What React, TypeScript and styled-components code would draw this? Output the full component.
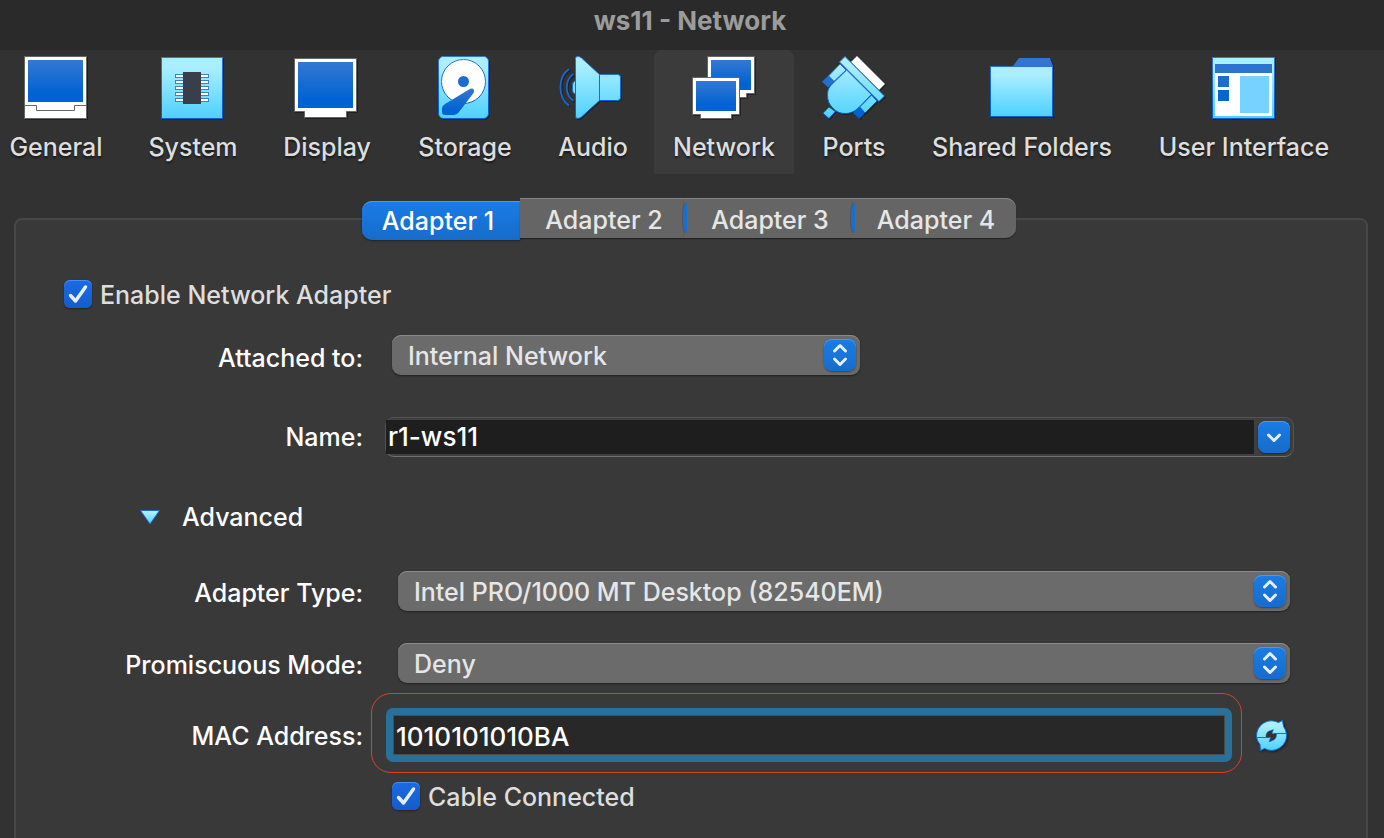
import React, { useState } from "react";
import styled, { createGlobalStyle, css } from "styled-components";

const GlobalStyle = createGlobalStyle`
  *, *::before, *::after { box-sizing: border-box; }
  body { margin: 0; background: #323232; }
  button, input, select { font: inherit; color: inherit; }
`;

const blueFill = css`
  background: linear-gradient(#1a7ce6, #166ccb);
  box-shadow: inset 0 1px 0 #4b9af0, 0 1px 2px rgba(0, 0, 0, 0.4);
`;

const Window = styled.main`
  display: flex;
  flex-direction: column;
  height: 100vh;
  overflow: hidden;
  background: #323232;
  color: #fff;
  font-family: Inter, "Liberation Sans", sans-serif;
  font-size: 25px;
  font-weight: 500;
  line-height: 32px;
`;

const TitleBar = styled.header`
  flex: none;
  height: 50px;
  padding: 5px 0 0;
  background: #2a2a2a;
  text-align: center;
`;

const Title = styled.h1`
  margin: 0;
  padding-right: 4px;
  color: #9c9c9c;
  font-size: 26px;
  font-weight: 700;
  line-height: 32px;
`;

const Toolbar = styled.nav`
  display: flex;
  flex: none;
  gap: 8px;
  margin-left: -10px;
`;

const ToolButton = styled.button<{ $width: number; $active?: boolean }>`
  display: flex;
  flex: none;
  flex-direction: column;
  align-items: center;
  gap: 12px;
  width: ${(p) => p.$width}px;
  height: 124px;
  padding: 5px 0 0;
  border: 0;
  border-radius: 8px 8px 0 0;
  background: ${(p) => (p.$active ? "#3b3b3b" : "transparent")};
  color: #dedede;
  text-shadow: 0 2px 2px rgba(0, 0, 0, 0.5);
  white-space: nowrap;
`;

const ToolIcon = styled.svg`
  flex: none;
  width: 64px;
  height: 64px;
  overflow: visible;
  filter: drop-shadow(1px 1px 0 rgba(0, 0, 0, 0.4));
`;

const Tabs = styled.div`
  position: relative;
  z-index: 1;
  display: flex;
  flex: none;
  align-self: center;
  width: 654px;
  height: 42px;
  margin: 24px 6px -22px 0;
`;

const Tab = styled.button<{ $active: boolean; $ear: boolean }>`
  position: relative;
  flex: 1 1 0;
  height: 40px;
  padding: 0 0 0 4px;
  border: 0;
  background: #656565;
  box-shadow: inset 0 1px 0 #858585, 0 1px 1px rgba(0, 0, 0, 0.4);
  color: #e6e6e6;
  line-height: 44px;
  white-space: nowrap;

  &:nth-child(3) {
    flex: 0 0 168px;
  }

  &:last-child {
    border-radius: 0 10px 10px 0;
  }

  ${(p) =>
    p.$active &&
    css`
      ${blueFill}
      flex: 0 0 158px;
      height: 39px;
      margin-top: 3px;
      padding: 0 6px 0 0;
      border-radius: 10px 0 0 10px;
      color: #fff;
      line-height: 36px;
    `}

  ${(p) =>
    p.$ear &&
    css`
      &::before {
        content: "";
        position: absolute;
        top: 5px;
        left: -1px;
        width: 4px;
        height: 30px;
        border-radius: 4px 0 0 4px / 12px 0 0 12px;
        background: #166fd2;
        box-shadow: -1px 0 0 #555;
      }
    `}
`;

const Panel = styled.section`
  flex: 1 0 auto;
  margin: 0 16px 0 14px;
  padding: 60px 73px 28px 0;
  border: 2px solid #474747;
  border-bottom: 0;
  border-radius: 8px 8px 0 0;
  background: #393939;
`;

const Row = styled.div<{ $top: number }>`
  display: flex;
  align-items: center;
  margin-top: ${(p) => p.$top}px;
`;

const FieldLabel = styled.label<{ $drop: number }>`
  flex: none;
  width: 347px;
  padding-top: ${(p) => p.$drop}px;
  text-align: right;
`;

const CheckLabel = styled.label<{ $left: number }>`
  display: flex;
  align-items: center;
  gap: 8px;
  height: 28px;
  margin-left: ${(p) => p.$left}px;
  color: #dedede;
`;

const CheckText = styled.span`
  padding-top: 2px;
`;

const CheckBox = styled.span`
  position: relative;
  display: block;
  width: 28px;
  height: 28px;

  input {
    display: block;
    width: 28px;
    height: 28px;
    margin: 0;
    border-radius: 6px;
    appearance: none;
    background: #6b6b6b;
    box-shadow: 0 1px 2px rgba(0, 0, 0, 0.4);
  }

  input:checked {
    background: linear-gradient(#1b6be6, #145ccb);
    box-shadow: inset 0 1px 0 #4a8cf0, 0 1px 2px rgba(0, 0, 0, 0.4);
  }

  svg {
    position: absolute;
    inset: 0;
    pointer-events: none;
  }

  input:not(:checked) + svg {
    display: none;
  }
`;

const SelectBox = styled.div<{ $narrow?: boolean }>`
  position: relative;
  flex: ${(p) => (p.$narrow ? "0 1 468px" : "1")};
  margin-left: ${(p) => (p.$narrow ? 29 : 35)}px;
  margin-right: 3px;

  select {
    display: block;
    width: 100%;
    height: 40px;
    padding: 2px 48px 0 16px;
    border: 0;
    border-radius: 9px;
    appearance: none;
    background: #6b6b6b;
    box-shadow: inset 0 1px 0 #8a8a8a, 0 1px 2px rgba(0, 0, 0, 0.45);
    color: #e6e6e6;
  }
`;

const Badge = styled.span`
  ${blueFill}
  position: absolute;
  top: 4px;
  right: 4px;
  width: 32px;
  height: 32px;
  border-radius: 8px;
  pointer-events: none;

  svg {
    display: block;
  }
`;

const Combo = styled.div`
  position: relative;
  display: flex;
  flex: 1;
  height: 40px;
  margin-left: 22px;
  margin-right: -1px;
  padding: 2px 39px 2px 0;
  border: 1px solid #525252;
  border-bottom-color: #707070;
  border-radius: 9px;
  background: #3f3f3f;

  input {
    width: 100%;
    min-width: 0;
    height: 34px;
    padding: 0 2px 2px;
    border: 0;
    outline: 0;
    background: #1e1e1e;
    font-size: 26px;
  }
`;

const ComboButton = styled.button`
  ${blueFill}
  position: absolute;
  top: 3px;
  right: 3px;
  width: 32px;
  height: 32px;
  padding: 0;
  border: 0;
  border-radius: 8px;

  svg {
    display: block;
  }
`;

const Disclosure = styled.button`
  display: flex;
  align-items: center;
  gap: 21px;
  height: 40px;
  margin-left: 123px;
  padding: 0;
  border: 0;
  background: none;
`;

const Marker = styled.div`
  flex: 1;
  margin-left: 8px;
  padding: 14px 9px 10px 14px;
  border: 1px solid #d9402a;
  border-radius: 20px;
`;

const MacInput = styled.input`
  display: block;
  width: 100%;
  height: 54px;
  padding: 2px 3px 0;
  border: 7px solid #29709b;
  border-radius: 7px;
  outline: 1px solid #4c4c4c;
  outline-offset: -8px;
  background: #282828;
  font-size: 26px;
`;

const RefreshButton = styled.button`
  flex: none;
  width: 32px;
  height: 32px;
  margin: 4px 5px 0 14px;
  padding: 0;
  border: 0;
  background: none;

  svg {
    display: block;
    overflow: visible;
    filter: drop-shadow(1px 1px 1px rgba(0, 0, 0, 0.5));
  }
`;

const GradientDefs = styled.svg`
  position: absolute;
  width: 0;
  height: 0;
`;

const Gradients = () => (
  <GradientDefs aria-hidden="true">
    <defs>
      <linearGradient id="blue" x1="0" y1="0" x2="0" y2="1">
        <stop offset="0" stopColor="#3578d1" />
        <stop offset="0.8" stopColor="#0063d3" />
      </linearGradient>
      <linearGradient id="cyan" x1="0" y1="0" x2="0" y2="1">
        <stop offset="0.15" stopColor="#abefff" />
        <stop offset="1" stopColor="#4dd1ff" />
      </linearGradient>
      <linearGradient id="edge" x1="0" y1="0" x2="0" y2="64" gradientUnits="userSpaceOnUse">
        <stop offset="0" stopColor="#3578d1" />
        <stop offset="0.8" stopColor="#0063d3" />
      </linearGradient>
      <linearGradient id="cyanTall" x1="0" y1="0" x2="0" y2="64" gradientUnits="userSpaceOnUse">
        <stop offset="0.15" stopColor="#abefff" />
        <stop offset="1" stopColor="#4dd1ff" />
      </linearGradient>
    </defs>
  </GradientDefs>
);

const GeneralIcon = () => (
  <>
    <rect x="0.5" y="1.5" width="62" height="62" fill="#fff" stroke="#666" />
    <rect x="4" y="5" width="55" height="42" fill="url(#blue)" />
    <path d="M0.5 50.5H12.5V55.5H50.5V50.5H62.5" fill="none" stroke="#666" />
  </>
);

const SystemIcon = () => (
  <>
    <rect x="0.5" y="2.5" width="61" height="61" fill="url(#cyan)" stroke="url(#edge)" />
    {[19, 25, 31, 37, 43].map((y) => (
      <rect key={y} x="14.5" y={y + 0.5} width="33" height="3" fill="#fff" stroke="#3d80c4" />
    ))}
    <rect x="22" y="17" width="18" height="32" fill="#393e4a" />
  </>
);

const DisplayIcon = () => (
  <>
    <path d="M-0.5 3.5H61.5V56.5H51.5V62.5H9.5V56.5H-0.5Z" fill="#fff" stroke="#666" />
    <rect x="3" y="7" width="55" height="46" fill="url(#blue)" />
  </>
);

const StorageIcon = () => (
  <>
    <rect x="5.5" y="1.5" width="50" height="62" rx="5" fill="url(#cyan)" stroke="url(#edge)" />
    <circle cx="30.5" cy="26.5" r="22" fill="#fff" stroke="url(#edge)" />
    <circle cx="30.5" cy="26.5" r="5.5" fill="#1b6dd2" />
    <path d="M36 34.5C39 32.5 42.5 34 40.5 38L26 57Q24 60 21 60H12Q9 60 9 57V53Q9 51 12 49Z" fill="url(#blue)" />
  </>
);

const AudioIcon = () => (
  <>
    <path d="M8 14C-3.400 22-3.400 42.600 8 50.700" fill="none" stroke="#176acb" strokeWidth="1.800" />
    <path d="M12.500 19C3.500 25 3.500 40 12.500 45.700" fill="none" stroke="#176acb" strokeWidth="1.800" />
    <path d="M15 25.500C11.500 26.500 11.500 29 11.500 32.500S11.500 38.500 15 39.500Z" fill="#7be0ff" stroke="#176acb" />
    <path
      d="M14.500 3.500Q14.500 1.500 16.500 1.500Q19 1.500 20.500 3L38.500 19.500H56.500Q59.500 19.500 59.500 22.500V42.500Q59.500 45.500 56.500 45.500H38.500L20.500 62Q19 63.500 16.500 63.500Q14.500 63.500 14.500 61.500Z"
      fill="url(#cyanTall)"
      stroke="url(#edge)"
    />
    <path d="M38.500 19.500V45.500" stroke="#1b6dd2" />
  </>
);

const NetworkIcon = () => (
  <>
    <path d="M15.500 1.500H62.500V38.500H54.500V42.500H23.500V38.500H15.500Z" fill="#fff" stroke="#666" />
    <rect x="19" y="5" width="40" height="30" fill="url(#blue)" />
    <path d="M0.500 22.500H47.500V59.500H39.500V63.500H8.500V59.500H0.500Z" fill="#fff" stroke="#666" />
    <rect x="4" y="26" width="40" height="30" fill="url(#blue)" />
  </>
);

const PortsIcon = () => (
  <>
    <path d="M35 1L63 29L57 35L29 7Z" fill="#fff" />
    <g fill="url(#cyanTall)" stroke="url(#edge)" strokeLinejoin="round">
      <path d="M7 52L13.300 56.500L7 63.500L1 58.300Z" />
      <path d="M18 9L24 15L12 26.500L6.500 21Z" />
      <path d="M49.500 40L55 46L43 58L37.500 52Z" />
      <path d="M24.700 15L49.300 39.500L37 52.500C33 56.500 28 58.500 23 58.500C18 58.500 14 56.500 11.300 53.500C7.500 50 5.500 46 5.500 40C5.500 35 7 32 10.700 28.500Z" />
      <path d="M23 1.500L62.500 41L57 46.500L17.500 7Z" />
    </g>
    <path d="M6.500 20.500L12 26.500L6.300 32.700L0 26.700Z" fill="#2170d2" />
    <path d="M37.500 51.500L43 57.700L37.300 64L31 57.700Z" fill="#0063d3" />
  </>
);

const FolderIcon = () => (
  <>
    <path d="M23 11L29 3H60L63 11Z" fill="#3375d0" />
    <rect x="0.500" y="11.500" width="62" height="50" fill="url(#cyan)" stroke="url(#edge)" />
  </>
);

const InterfaceIcon = () => (
  <>
    <rect x="0.500" y="2.500" width="62" height="61" fill="url(#cyan)" stroke="url(#edge)" />
    <rect x="3" y="9" width="57" height="9" fill="#2d74d1" />
    <rect x="3" y="18" width="57" height="43" fill="#fff" />
    <rect x="6" y="21" width="11" height="11" fill="#1c6dd2" />
    <rect x="6" y="35" width="11" height="11" fill="#0565d3" />
    <rect x="28" y="21" width="29" height="37" fill="#78d2ff" />
  </>
);

const ChevronDown = () => (
  <svg width="32" height="32" viewBox="0 0 32 32" fill="none" aria-hidden="true">
    <path d="M10.500 14L16 19.500L21.500 14" stroke="#e6eefb" strokeWidth="3" strokeLinecap="round" strokeLinejoin="round" />
  </svg>
);

const UpDown = () => (
  <svg width="32" height="32" viewBox="0 0 32 32" fill="none" aria-hidden="true">
    <path
      d="M10.500 12L16 6.500L21.500 12M10.500 20L16 25.500L21.500 20"
      stroke="#e6eefb"
      strokeWidth="3"
      strokeLinecap="round"
      strokeLinejoin="round"
    />
  </svg>
);

const tools = [
  { name: "General", width: 132, Icon: GeneralIcon },
  { name: "System", width: 126, Icon: SystemIcon },
  { name: "Display", width: 126, Icon: DisplayIcon },
  { name: "Storage", width: 134, Icon: StorageIcon },
  { name: "Audio", width: 106, Icon: AudioIcon },
  { name: "Network", width: 140, Icon: NetworkIcon },
  { name: "Ports", width: 104, Icon: PortsIcon },
  { name: "Shared Folders", width: 216, Icon: FolderIcon },
  { name: "User Interface", width: 212, Icon: InterfaceIcon },
];

const adapters = ["Adapter 1", "Adapter 2", "Adapter 3", "Adapter 4"];

function Check({ label, left }: { label: string; left: number }) {
  return (
    <CheckLabel $left={left}>
      <CheckBox>
        <input type="checkbox" defaultChecked />
        <svg width="28" height="28" viewBox="0 0 28 28" fill="none" aria-hidden="true">
          <path d="M6.500 15.500L11.500 21L21.500 7" stroke="#e6eefb" strokeWidth="3.500" strokeLinecap="round" strokeLinejoin="round" />
        </svg>
      </CheckBox>
      <CheckText>{label}</CheckText>
    </CheckLabel>
  );
}

function Select({ id, value, narrow }: { id: string; value: string; narrow?: boolean }) {
  return (
    <SelectBox $narrow={narrow}>
      <select id={id} defaultValue={value}>
        <option>{value}</option>
      </select>
      <Badge>
        <UpDown />
      </Badge>
    </SelectBox>
  );
}

export default function App() {
  const [name, setName] = useState("r1-ws11");
  const [mac, setMac] = useState("1010101010BA");

  return (
    <Window>
      <GlobalStyle />
      <Gradients />
      <TitleBar>
        <Title>ws11 - Network</Title>
      </TitleBar>
      <Toolbar>
        {tools.map(({ name: tool, width, Icon }) => (
          <ToolButton key={tool} $width={width} $active={tool === "Network"}>
            <ToolIcon viewBox="0 0 64 64" aria-hidden="true">
              <Icon />
            </ToolIcon>
            {tool}
          </ToolButton>
        ))}
      </Toolbar>
      <Tabs role="tablist">
        {adapters.map((adapter, i) => (
          <Tab key={adapter} role="tab" aria-selected={i === 0} $active={i === 0} $ear={i > 1}>
            {adapter}
          </Tab>
        ))}
      </Tabs>
      <Panel>
        <Check label="Enable Network Adapter" left={48} />
        <Row $top={27}>
          <FieldLabel htmlFor="attached" $drop={6}>Attached to:</FieldLabel>
          <Select id="attached" value="Internal Network" narrow />
        </Row>
        <Row $top={42}>
          <FieldLabel htmlFor="name" $drop={0}>Name:</FieldLabel>
          <Combo>
            <input id="name" value={name} onChange={(e) => setName(e.target.value)} />
            <ComboButton aria-label="Show names">
              <ChevronDown />
            </ComboButton>
          </Combo>
        </Row>
        <Row $top={40}>
          <Disclosure aria-expanded="true">
            <svg width="22" height="16" viewBox="0 0 22 16" aria-hidden="true">
              <path d="M1.500 1.500H20.500L11 15Z" fill="url(#cyan)" stroke="#1b6dd2" strokeLinejoin="round" />
            </svg>
            Advanced
          </Disclosure>
        </Row>
        <Row $top={34}>
          <FieldLabel htmlFor="type" $drop={3}>Adapter Type:</FieldLabel>
          <Select id="type" value="Intel PRO/1000 MT Desktop (82540EM)" />
        </Row>
        <Row $top={32}>
          <FieldLabel htmlFor="mode" $drop={3}>Promiscuous Mode:</FieldLabel>
          <Select id="mode" value="Deny" />
        </Row>
        <Row $top={10}>
          <FieldLabel htmlFor="mac" $drop={6}>MAC Address:</FieldLabel>
          <Marker>
            <MacInput id="mac" value={mac} onChange={(e) => setMac(e.target.value)} />
          </Marker>
          <RefreshButton aria-label="Generate new address">
            <svg width="32" height="32" viewBox="0 0 32 32" aria-hidden="true">
              <path
                d="M0.500 17A15 15 0 0 1 22.500 3.500L26.500 1.500L27.500 7.500A15 15 0 0 1 30.500 15A15 15 0 0 1 8.500 29.500L4.500 31.500L4 25.500A15 15 0 0 1 0.500 18Z"
                fill="url(#cyan)"
                stroke="#0f70d8"
                strokeLinejoin="round"
              />
              <path d="M0.500 18.500H13M18 14.500H30.500" stroke="#0f70d8" />
              <path
                d="M10 18.500C9.500 14.500 11.500 12 14.500 11.500L17.500 10.500L16 14.500H20.500C21 18.500 19 21 16.500 21.500L13 23L14.500 18.500Z"
                fill="#333"
                stroke="#1b78d8"
                strokeWidth="0.500"
              />
            </svg>
          </RefreshButton>
        </Row>
        <Row $top={9}>
          <Check label="Cable Connected" left={376} />
        </Row>
      </Panel>
    </Window>
  );
}
